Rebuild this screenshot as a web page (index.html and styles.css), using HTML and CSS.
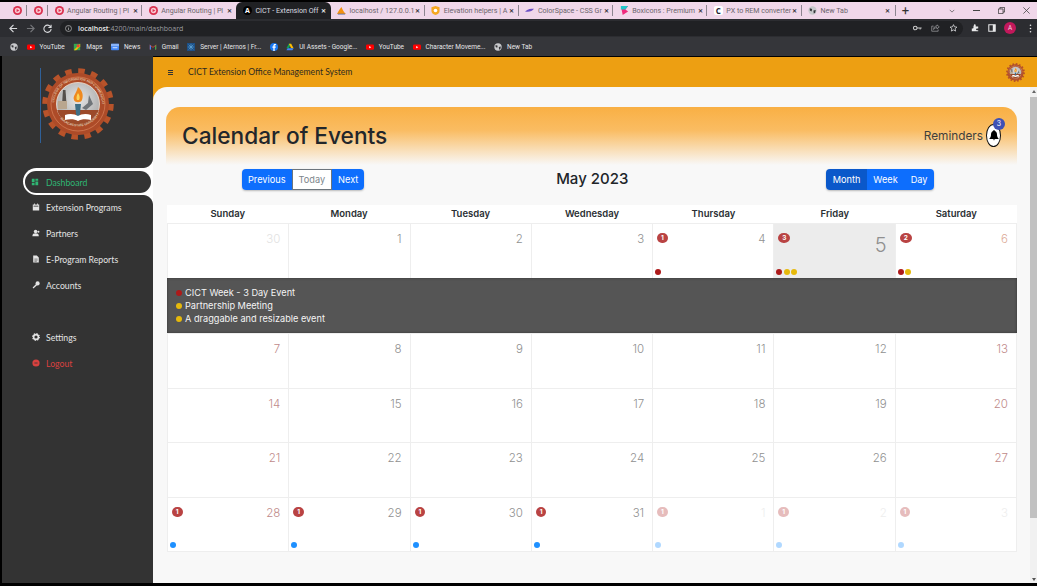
FILE: index.html
```html
<!DOCTYPE html>
<html lang="en">
<head>
<meta charset="utf-8">
<title>CICT - Extension Office</title>
<link rel="stylesheet" href="styles.css">
</head>
<body>
<svg class="defs" width="0" height="0">
  <defs>
    <radialGradient id="sealCore" cx="50%" cy="40%" r="60%"><stop offset="0" stop-color="#e6e6e6"/><stop offset="1" stop-color="#a9a9a9"/></radialGradient>
    <symbol id="play" viewBox="0 0 10 10"><circle cx="5" cy="5" r="5" fill="#d9304f"/><circle cx="5" cy="5" r="3" fill="#f7c6cf"/><path d="M4 3.2 7 5 4 6.8z" fill="#d9304f"/></symbol>
    <symbol id="yt" viewBox="0 0 10 8"><rect y="1" width="10" height="6.4" rx="1.6" fill="#f00"/><path d="M4 2.8 6.6 4.2 4 5.6z" fill="#fff"/></symbol>
    <symbol id="globe" viewBox="0 0 10 10"><circle cx="5" cy="5" r="4.6" fill="#c8c9cc"/><path d="M2 2.6 4.6 3.4 4 6 2 5ZM6 5l2.6-.6L8 7.6 6.4 8.4Z" fill="#35363a"/></symbol>
    <symbol id="seal" viewBox="0 0 72 72">
      <circle cx="36" cy="36" r="32.5" fill="none" stroke="#b8532a" stroke-width="6.5" stroke-dasharray="6.4 6.36"/>
      <circle cx="36" cy="36" r="31" fill="#ad4b28"/>
      <circle cx="36" cy="36" r="27" fill="none" stroke="#d9825a" stroke-width=".7"/>
      <circle cx="36" cy="36" r="21.5" fill="url(#sealCore)" stroke="#f2e6d8" stroke-width=".8"/>
      <path d="M15.2 42a21.5 21.5 0 0 0 41.6 0z" fill="#9c4a2a"/>
      <path d="M21 22h2.500l1 14h-4.500z" fill="#55504c"/>
      <path d="M16 33h9v8h-9z" fill="#b9a68f"/>
      <path d="M47 27l4 9-7 6-4-2 6-5z" fill="#6f7478"/>
      <path d="M33 36h6l-1.600 15h-2.800z" fill="#3f6f86"/>
      <path d="M36 19c5 4 5.500 9 4 13-1 3-7 3-8 0-1.500-4 2-6 4-13z" fill="#ef8a1f"/>
      <path d="M36 25c2 3 2 5 1 7h-2c-1-2-.5-4 1-7z" fill="#fbd45a"/>
      <path d="M23 47c5-2 10-1 13 1 3-2 8-3 13-1v5c-5-1.500-10-1-13 1-3-2-8-2.500-13-1z" fill="#fff"/>
      <path id="sealArc" d="M36 36m-24 0a24 24 0 1 1 48 0" fill="none"/>
      <path id="sealArcLow" d="M14 44a24 24 0 0 0 44 0" fill="none"/>
      <text class="seal-text"><textPath href="#sealArc" startOffset="2%">COLLEGE OF INFORMATION AND COMMUNICATIONS TECHNOLOGY</textPath></text>
      <text class="seal-text"><textPath href="#sealArcLow" startOffset="14%">BULACAN STATE UNIVERSITY</textPath></text>
    </symbol>
  </defs>
</svg>

<div class="tabstrip">
  <div class="tab tab-pin"><svg class="fav"><use href="#play"/></svg></div>
  <div class="tab tab-pin"><svg class="fav"><use href="#play"/></svg></div>
  <div class="tab"><svg class="fav"><use href="#play"/></svg><span class="tab-text">Angular Routing | Pl</span><span class="tab-x">✕</span></div>
  <div class="tab tab-prev"><svg class="fav"><use href="#play"/></svg><span class="tab-text">Angular Routing | Pl</span><span class="tab-x">✕</span></div>
  <div class="tab tab-active"><span class="fav fav-a">A</span><span class="tab-text">CICT - Extension Off</span><span class="tab-x">✕</span></div>
  <div class="tab"><svg class="fav" viewBox="0 0 10 10"><path d="M0 9C2 5 3 3 5 1c1 3 3 6 5 8z" fill="#f29111"/><path d="M1 9h8" stroke="#5b6fa8"/></svg><span class="tab-text">localhost / 127.0.0.1</span><span class="tab-x">✕</span></div>
  <div class="tab"><svg class="fav" viewBox="0 0 10 10"><path d="M5 0l4.500 1.500v4C9.500 8 7 9.500 5 10 3 9.500.5 8 .5 5.500v-4z" fill="#f6a821"/><circle cx="5" cy="5" r="2" fill="#fff"/></svg><span class="tab-text">Elevation helpers | A</span><span class="tab-x">✕</span></div>
  <div class="tab"><svg class="fav" viewBox="0 0 10 10"><path d="M0 6c3-3 7-3 10-3-2 3-6 4-10 3z" fill="#6a4fc4"/></svg><span class="tab-text">ColorSpace - CSS Gr</span><span class="tab-x">✕</span></div>
  <div class="tab"><svg class="fav" viewBox="0 0 10 10"><path d="M1 0h8L6 4 9 6 3 10z" fill="#f02a7d"/><path d="M1 0h8L6 4H1z" fill="#1fc7c9"/></svg><span class="tab-text">Boxicons : Premium</span><span class="tab-x">✕</span></div>
  <div class="tab"><span class="fav fav-c">C</span><span class="tab-text">PX to REM converter</span><span class="tab-x">✕</span></div>
  <div class="tab tab-last"><svg class="fav"><use href="#globe"/></svg><span class="tab-text">New Tab</span><span class="tab-x">✕</span></div>
  <span class="tab-plus">+</span>
  <div class="win-controls">
    <svg class="win-chevron" viewBox="0 0 8 5"><path d="M1 1l3 3 3-3" fill="none" stroke="#555"/></svg>
    <span class="win-min"></span>
    <svg class="win-max" viewBox="0 0 9 9"><path d="M.5 2.500h6v6h-6zM2.500 2.500v-2h6v6h-2" fill="none" stroke="#333"/></svg>
    <svg class="win-close" viewBox="0 0 9 9"><path d="M.5.5l8 8M8.500.5l-8 8" stroke="#444"/></svg>
  </div>
</div>

<div class="toolbar">
  <svg class="nav-ico" viewBox="0 0 10 10"><path d="M9 5H1.500M5 1 1 5l4 4" fill="none" stroke="#d8d9dc" stroke-width="1.300"/></svg>
  <svg class="nav-ico" viewBox="0 0 10 10"><path d="M1 5h7.500M5 1l4 4-4 4" fill="none" stroke="#75767a" stroke-width="1.300"/></svg>
  <svg class="nav-ico" viewBox="0 0 10 10"><path d="M8.500 3.300A4 4 0 1 0 9 5.500M9 .8v3H6" fill="none" stroke="#d8d9dc" stroke-width="1.200"/></svg>
  <div class="omnibox">
    <svg class="info" viewBox="0 0 10 10"><circle cx="5" cy="5" r="4.300" fill="none" stroke="#bbb"/><path d="M5 4.300v3M5 2.500v1" stroke="#bbb"/></svg>
    <span class="url"><b>localhost</b>:4200/main/dashboard</span>
    <svg class="omni-ico" viewBox="0 0 12 8"><circle cx="3" cy="4" r="2.400" fill="none" stroke="#ccc" stroke-width="1.400"/><path d="M5 4h6.500M9.500 4v2" stroke="#ccc" stroke-width="1.300"/></svg>
    <svg class="omni-ico" viewBox="0 0 12 10"><path d="M8 .8l3 2.700-3 2.700V4.500C5.500 4.500 4 5.500 3.500 7 3.500 4 5 2.500 8 2.300zM9.500 7v2.300H1V2.500h2.500" fill="none" stroke="#9a9a9e"/></svg>
    <svg class="omni-ico" viewBox="0 0 10 10"><path d="M5 .8l1.300 2.800 3 .3-2.300 2 .7 3L5 7.400 2.300 8.900l.7-3-2.300-2 3-.3z" fill="none" stroke="#d8d9dc"/></svg>
  </div>
  <div class="tool-right">
    <svg class="tool-ico" viewBox="0 0 10 10"><path d="M1 3h2.500V1.500a1.200 1.200 0 0 1 2.400 0V3H9v2.500H7.500a1.200 1.200 0 0 0 0 2.400H9V9H1V5.500h.9a1.200 1.200 0 0 0 0-2.500z" fill="#e8e9ea"/></svg>
    <svg class="tool-ico" viewBox="0 0 10 10"><path d="M1 1h8v8H1z" fill="none" stroke="#e8e9ea" stroke-width="1.300"/><path d="M6 1h3v8H6z" fill="#e8e9ea"/></svg>
    <span class="avatar">A</span>
    <svg class="tool-dots" viewBox="0 0 3 11"><circle cx="1.500" cy="1.500" r="1" fill="#e8e9ea"/><circle cx="1.500" cy="5.500" r="1" fill="#e8e9ea"/><circle cx="1.500" cy="9.500" r="1" fill="#e8e9ea"/></svg>
  </div>
</div>

<div class="bookmarks">
  <svg class="bm-first"><use href="#globe"/></svg>
  <span class="bm"><svg class="bm-ico"><use href="#yt"/></svg>YouTube</span>
  <span class="bm"><svg class="bm-ico" viewBox="0 0 10 10"><path d="M1 1h8v8H1z" fill="#34a853"/><path d="M1 9 9 1v3L4 9z" fill="#fbbc04"/><circle cx="6.500" cy="3.500" r="2" fill="#ea4335"/></svg>Maps</span>
  <span class="bm"><svg class="bm-ico" viewBox="0 0 10 10"><rect y="1" width="10" height="8" rx="1" fill="#4285f4"/><rect y="1" width="10" height="3" fill="#8ab4f8"/><path d="M2 5.500h6v1H2z" fill="#fff"/></svg>News</span>
  <span class="bm"><svg class="bm-ico" viewBox="0 0 10 10"><path d="M1 2v6h1.500V4L5 6l2.500-2v4H9V2L5 5z" fill="#ea4335"/><path d="M1 2v6h1.500V4z" fill="#4285f4"/><path d="M9 2v6H7.500V4z" fill="#34a853"/></svg>Gmail</span>
  <span class="bm"><svg class="bm-ico" viewBox="0 0 10 10"><rect width="10" height="10" fill="#1c4f86"/><path d="M2 2l6 6M8 2 2 8M5 1v8M1 5h8" stroke="#6cb4e4" stroke-width=".7"/></svg>Server | Aternos | Fr...</span>
  <span class="bm"><svg class="bm-ico" viewBox="0 0 10 10"><circle cx="5" cy="5" r="5" fill="#1877f2"/><path d="M5.800 10V6h1.300l.2-1.500H5.800v-1c0-.5.2-.8.800-.8h.8V1.300C7 1.200 6.600 1.200 6.200 1.200 5 1.200 4.200 2 4.200 3.300v1.200H3V6h1.200v4z" fill="#fff"/></svg></span>
  <span class="bm"><svg class="bm-ico" viewBox="0 0 10 10"><path d="M3.500 1h3L3.500 6.500H.5z" fill="#0f9d58"/><path d="M6.500 1l3 5.500h-3L3.500 1z" fill="#fbbc04"/><path d="M.5 9 2 6.500h7.500L8 9z" fill="#4285f4"/></svg>UI Assets - Google...</span>
  <span class="bm"><svg class="bm-ico"><use href="#yt"/></svg>YouTube</span>
  <span class="bm"><svg class="bm-ico"><use href="#yt"/></svg>Character Moveme...</span>
  <span class="bm"><svg class="bm-ico"><use href="#globe"/></svg>New Tab</span>
</div>

<div class="app">
  <aside class="sidebar">
    <div class="brand">
      <span class="brand-rule"></span>
      <svg class="brand-seal"><use href="#seal"/></svg>
    </div>
    <a class="nav-active">
      <span class="nav-pill">
        <svg class="nav-glyph" viewBox="0 0 10 10"><path d="M1 1h3.500v4H1zM5.500 1H9v2.500H5.500zM5.500 4.500H9V9H5.500zM1 6h3.500v3H1z" fill="currentColor"/></svg>Dashboard
      </span>
    </a>
    <a class="nav-item"><svg class="nav-glyph" viewBox="0 0 10 10"><path d="M1 2h8v7.500H1zM2.500.5h1V2h-1zM6.500.5h1V2h-1z" fill="currentColor"/><path d="M2 4h6" stroke="#333"/></svg>Extension Programs</a>
    <a class="nav-item"><svg class="nav-glyph" viewBox="0 0 10 10"><circle cx="4.500" cy="3" r="2.200" fill="currentColor"/><path d="M.5 9c0-3 1.500-3.800 4-3.800s4 .8 4 3.800z" fill="currentColor"/><circle cx="8" cy="3.500" r="1.300" fill="currentColor"/></svg>Partners</a>
    <a class="nav-item"><svg class="nav-glyph" viewBox="0 0 10 10"><path d="M1.500.5H6L8.500 3v6.500h-7z" fill="currentColor"/><path d="M3 5h4M3 6.500h4M3 8h3" stroke="#333" stroke-width=".6"/></svg>E-Program Reports</a>
    <a class="nav-item"><svg class="nav-glyph" viewBox="0 0 10 10"><circle cx="7" cy="3" r="2.600" fill="currentColor"/><path d="M5.500 3.500 .8 8.200 1.800 9.500 6.500 5z" fill="currentColor"/></svg>Accounts</a>
    <div class="nav-gap"></div>
    <a class="nav-item"><svg class="nav-glyph" viewBox="0 0 10 10"><circle cx="5" cy="5" r="3" fill="none" stroke="currentColor" stroke-width="2"/><circle cx="5" cy="5" r="4.200" fill="none" stroke="currentColor" stroke-width="1.500" stroke-dasharray="1.600 1.700"/></svg>Settings</a>
    <a class="nav-item nav-logout"><svg class="nav-glyph" viewBox="0 0 10 10"><circle cx="5" cy="5" r="4.500" fill="currentColor"/><path d="M3 5h4" stroke="#333"/></svg>Logout</a>
  </aside>

  <div class="workspace">
    <header class="topbar">
      <span class="burger"></span>
      <span class="topbar-title">CICT Extension Office Management System</span>
      <svg class="topbar-seal"><use href="#seal"/></svg>
    </header>
    <div class="content-row">
      <main class="content">
        <section class="hero">
          <h1>Calendar of Events</h1>
          <div class="reminders">
            <span>Reminders</span>
            <span class="bell">
              <svg viewBox="0 0 10 11"><path d="M5 0c.5 0 .8.4.8.900C7.500 1.400 8 3 8 4.500c0 2 .5 3 1.500 3.800v.7h-9v-.7C1.500 7.500 2 6.500 2 4.500 2 3 2.500 1.400 4.200.9 4.200.4 4.500 0 5 0zM3.800 9.500h2.400C6 10.500 4 10.500 3.800 9.500z" fill="#000"/></svg>
              <span class="bell-count">3</span>
            </span>
          </div>
        </section>

        <div class="cal-toolbar">
          <div class="btn-group">
            <button class="btn">Previous</button>
            <button class="btn btn-today">Today</button>
            <button class="btn">Next</button>
          </div>
          <h2>May 2023</h2>
          <div class="btn-group btn-group-views">
            <button class="btn btn-on">Month</button>
            <button class="btn">Week</button>
            <button class="btn">Day</button>
          </div>
        </div>

        <div class="cal-head">
          <span>Sunday</span><span>Monday</span><span>Tuesday</span><span>Wednesday</span><span>Thursday</span><span>Friday</span><span>Saturday</span>
        </div>

        <div class="cal-grid">
          <div class="cell"><div class="cell-top"><span class="num out">30</span></div></div>
          <div class="cell"><div class="cell-top"><span class="num">1</span></div></div>
          <div class="cell"><div class="cell-top"><span class="num">2</span></div></div>
          <div class="cell"><div class="cell-top"><span class="num">3</span></div></div>
          <div class="cell"><div class="cell-top"><span class="count">1</span><span class="num">4</span></div><div class="dots"><i class="dot red"></i></div></div>
          <div class="cell today"><div class="cell-top"><span class="count wide">3</span><span class="num big">5</span></div><div class="dots"><i class="dot red"></i><i class="dot yellow"></i><i class="dot yellow"></i></div></div>
          <div class="cell"><div class="cell-top"><span class="count wide">2</span><span class="num sat-first">6</span></div><div class="dots"><i class="dot red"></i><i class="dot yellow"></i></div></div>

          <div class="events">
            <div class="event"><i class="dot red"></i>CICT Week - 3 Day Event</div>
            <div class="event"><i class="dot yellow"></i>Partnership Meeting</div>
            <div class="event"><i class="dot yellow"></i>A draggable and resizable event</div>
          </div>

          <div class="cell"><div class="cell-top"><span class="num end">7</span></div></div>
          <div class="cell"><div class="cell-top"><span class="num">8</span></div></div>
          <div class="cell"><div class="cell-top"><span class="num">9</span></div></div>
          <div class="cell"><div class="cell-top"><span class="num">10</span></div></div>
          <div class="cell"><div class="cell-top"><span class="num">11</span></div></div>
          <div class="cell"><div class="cell-top"><span class="num">12</span></div></div>
          <div class="cell"><div class="cell-top"><span class="num end">13</span></div></div>

          <div class="cell"><div class="cell-top"><span class="num end">14</span></div></div>
          <div class="cell"><div class="cell-top"><span class="num">15</span></div></div>
          <div class="cell"><div class="cell-top"><span class="num">16</span></div></div>
          <div class="cell"><div class="cell-top"><span class="num">17</span></div></div>
          <div class="cell"><div class="cell-top"><span class="num">18</span></div></div>
          <div class="cell"><div class="cell-top"><span class="num">19</span></div></div>
          <div class="cell"><div class="cell-top"><span class="num end">20</span></div></div>

          <div class="cell"><div class="cell-top"><span class="num end">21</span></div></div>
          <div class="cell"><div class="cell-top"><span class="num">22</span></div></div>
          <div class="cell"><div class="cell-top"><span class="num">23</span></div></div>
          <div class="cell"><div class="cell-top"><span class="num">24</span></div></div>
          <div class="cell"><div class="cell-top"><span class="num">25</span></div></div>
          <div class="cell"><div class="cell-top"><span class="num">26</span></div></div>
          <div class="cell"><div class="cell-top"><span class="num end">27</span></div></div>

          <div class="cell"><div class="cell-top"><span class="count">1</span><span class="num end">28</span></div><div class="dots"><i class="dot blue"></i></div></div>
          <div class="cell"><div class="cell-top"><span class="count">1</span><span class="num">29</span></div><div class="dots"><i class="dot blue"></i></div></div>
          <div class="cell"><div class="cell-top"><span class="count">1</span><span class="num">30</span></div><div class="dots"><i class="dot blue"></i></div></div>
          <div class="cell"><div class="cell-top"><span class="count">1</span><span class="num">31</span></div><div class="dots"><i class="dot blue"></i></div></div>
          <div class="cell faded"><div class="cell-top"><span class="count">1</span><span class="num">1</span></div><div class="dots"><i class="dot blue"></i></div></div>
          <div class="cell faded"><div class="cell-top"><span class="count">1</span><span class="num">2</span></div><div class="dots"><i class="dot blue"></i></div></div>
          <div class="cell faded"><div class="cell-top"><span class="count">1</span><span class="num">3</span></div><div class="dots"><i class="dot blue"></i></div></div>
        </div>
      </main>
      <div class="scrollbar">
        <span class="sb-up"></span>
        <span class="sb-thumb"></span>
        <span class="sb-down"></span>
      </div>
    </div>
  </div>
</div>
</body>
</html>
```
FILE: styles.css
```css
* { box-sizing: border-box; }
html, body { margin: 0; height: 100%; }
body {
  width: 1037px; height: 586px; overflow: hidden; background: #000;
  display: flex; flex-direction: column; padding: 2px 0 3px;
  font-family: "Inter", "Liberation Sans", sans-serif; color: #212529;
}
.defs { position: absolute; }

/* browser chrome */
.tabstrip {
  height: 17px; flex: none; display: flex; align-items: center; padding-left: 6px;
  background: #f0d7e9; font: 7.100px "Roboto", "Liberation Sans", sans-serif; color: #6b656c;
}
.tab {
  width: 94.2px; height: 100%; flex: none; display: flex; align-items: center; gap: 3.500px;
  padding: 0 3px 0 6.500px; position: relative;
}
.tab::after { content: ""; position: absolute; right: 0; top: 3px; bottom: 3px; width: 1px; background: #8d8590; }
.tab-pin { width: 21px; padding: 0 0 0 6.500px; }
.tab-prev::after, .tab-active::after, .tab-last::after { background: transparent; }
.tab-last { border-right: 1px solid #8d8590; height: 11px; }
.tab-active { background: #202124; color: #dcdde0; border-radius: 6px 6px 0 0; }
.tab-text { flex: 1; min-width: 0; white-space: nowrap; }
.tab-x { font-size: 6px; width: 8px; text-align: center; font-weight: 700; color: #3a373c; }
.tab-active .tab-x { color: #e8e9ea; }
.fav { width: 9px; height: 9px; flex: none; }
.fav-a { background: #000; color: #fff; border-radius: 50%; font: 700 7px/9px "Open Sans", sans-serif; text-align: center; }
.fav-c { background: #fff; color: #223; border-radius: 2px; font: 700 8px/9px "Open Sans", sans-serif; text-align: center; }
.tab-plus { margin-left: 6px; font-size: 13px; line-height: 1; color: #333; }
.win-controls { margin-left: auto; display: flex; align-items: center; gap: 18px; padding-right: 7px; }
.win-chevron { width: 6px; height: 4px; }
.win-min { width: 7px; height: 1px; background: #444; }
.win-max { width: 7px; height: 7px; }
.win-close { width: 7px; height: 7px; }

.toolbar {
  height: 18px; flex: none; display: flex; align-items: center; padding: 0 0 0 9px; gap: 8px;
  background: #2c2d31;
}
.nav-ico { width: 9px; height: 9px; flex: none; }
.omnibox {
  flex: none; width: 903px; height: 15px; border-radius: 8px; background: #202124;
  display: flex; align-items: center; padding: 0 5px; gap: 9px;
}
.info { width: 7px; height: 7px; flex: none; }
.url { font: 7px "Open Sans", sans-serif; color: #9b9ca0; margin-left: -3px; flex: 1; }
.url b { color: #eceded; font-weight: 600; }
.omni-ico { width: 9px; height: 8px; flex: none; }
.tool-right { display: flex; align-items: center; gap: 9px; }
.tool-ico { width: 8px; height: 8px; }
.avatar {
  width: 12px; height: 12px; border-radius: 50%; background: #c2185b; color: #f6d5e3;
  font: 6.500px/12px "Open Sans", sans-serif; text-align: center; margin-left: -1px;
}
.tool-dots { width: 3px; height: 9px; margin-left: 4px; }

.bookmarks {
  height: 19px; flex: none; display: flex; align-items: center; gap: 8.500px; padding: 0 0 0 10px;
  background: #35363a; font: 6.500px "Roboto", sans-serif; color: #e6e6e8;
}
.bm-first { width: 8px; height: 8px; }
.bm { display: flex; align-items: center; gap: 5px; white-space: nowrap; }
.bm-ico { width: 8px; height: 8px; flex: none; }

/* app */
.app { flex: 1; min-height: 0; display: flex; padding-left: 2px; background: #000; }
.sidebar {
  width: 151px; flex: none; display: flex; flex-direction: column; background: #333;
  font: 8.700px "Lato", sans-serif; color: #e4e4e4;
}
.brand { height: 112px; flex: none; display: flex; align-items: flex-start; padding: 12px 0 0 38px; }
.brand-rule { width: 1px; height: 75px; background: #2f6098; flex: none; }
.brand-seal { width: 72px; height: 72px; margin-left: 1px; flex: none; }
.seal-text { font: 3.200px "Liberation Sans", sans-serif; fill: #f5e6d5; }
.nav-item { height: 26px; flex: none; display: flex; align-items: center; padding: 0 0 1.500px 30px; gap: 6px; }
.nav-glyph { width: 8px; height: 8px; flex: none; }
.nav-active {
  height: 27px; flex: none; margin-left: 21px; padding: 3px 2px 2px 2px; position: relative; color: #2fb673;
  background: #fff; border-radius: 14px 0 0 14px; display: flex;
}
.nav-active::before, .nav-active::after { content: ""; position: absolute; right: 0; width: 10px; height: 10px; }
.nav-active::before { top: -10px; background: radial-gradient(circle at 0 0, #333 9.500px, #fff 10.500px); }
.nav-active::after { bottom: -10px; background: radial-gradient(circle at 0 100%, #333 9.500px, #fff 10.500px); }
.nav-pill {
  flex: 1; padding-left: 6px; display: flex; align-items: center; gap: 7px;
  background: #333; border-radius: 12px;
}
.nav-gap { height: 26px; flex: none; }
.nav-logout { color: #d9413f; }

.workspace { flex: 1; min-width: 0; display: flex; flex-direction: column; background: #ed9f12; margin-top: 1px; }
.topbar { height: 30px; flex: none; display: flex; align-items: center; padding: 0 12px 0 15px; font: 8.600px "Lato", sans-serif; color: #2d2a20; }
.burger { width: 5px; height: 5px; border-top: 1px solid #333; border-bottom: 1px solid #333; position: relative; }
.burger::after { content: ""; position: absolute; left: 0; right: 0; top: 1px; height: 1px; background: #333; }
.topbar-title { margin-left: 15px; }
.topbar-seal { width: 19px; height: 19px; margin-left: auto; }
.content-row { flex: 1; min-height: 0; display: flex; }
.content {
  flex: 1; min-width: 0; background: #f8f8f8; border-top-left-radius: 14px; padding: 20px 13px 0 13px;
  display: flex; flex-direction: column;
}
.scrollbar { width: 7px; flex: none; background: #f1f1f1; display: flex; flex-direction: column; align-items: center; }
.sb-up { border: 2px solid transparent; border-top: 0; border-bottom: 3px solid #666; margin-top: 3px; }
.sb-thumb { width: 7px; height: 421px; margin-top: 4px; background: #c1c1c1; }
.sb-down { border: 2px solid transparent; border-bottom: 0; border-top: 3px solid #555; margin-top: auto; margin-bottom: 2px; }

.hero {
  height: 58px; flex: none; display: flex; align-items: center; justify-content: space-between;
  padding: 0 16px 0 16px; border-radius: 14px 14px 0 0;
  background: linear-gradient(180deg, #f9b044 0%, #fabc62 40%, #f8f8f8 100%);
}
.hero h1 { margin: 0 0 1px; font: 500 22.700px "Inter", sans-serif; color: #22262b; }
.reminders { display: flex; align-items: center; gap: 3px; font: 11.800px "Inter", sans-serif; color: #3f3e3b; }
.bell {
  width: 15px; height: 23px; margin-top: -2px; border-radius: 50%; background: #fff; border: 1px solid #111; position: relative;
  display: flex; align-items: center; justify-content: center;
}
.bell svg { width: 10px; height: 11px; }
.bell-count {
  position: absolute; top: -7px; right: -5px; width: 12px; height: 12px; border-radius: 50%;
  background: #3f51b5; color: #fff; font: 7px/12px "Inter", sans-serif; text-align: center;
}
.cal-toolbar { display: flex; align-items: center; justify-content: space-between; padding: 3px 83px 1px 76px; height: 25px; flex: none; }
.cal-toolbar h2 { margin: 0 6px 0 0; font: 500 15px "Inter", sans-serif; color: #212529; }
.btn-group { display: flex; border-radius: 4px; box-shadow: 0 1px 2px rgba(0,0,0,.25); overflow: hidden; margin-top: 1px; }
.btn {
  height: 21px; padding: 0 6px; border: 0; background: #0d6efd; color: #fff; font: 9.200px "Inter", sans-serif;
}
.btn-group-views .btn { padding: 0 6.500px; }
.btn-today { background: #fff; color: #7d858c; border: 1px solid #6c757d; }
.btn-on { background: #0a58ca; }

.cal-head {
  margin: 15px 0 0 1px; height: 18px; flex: none; display: grid; grid-template-columns: repeat(7, 1fr);
  background: #fff; width: 850px;
  font: 600 9.500px/18px "Inter", sans-serif; color: #2b2f33; text-align: center;
}
.cal-grid {
  margin-left: 1px; width: 850px; display: grid; grid-template-columns: repeat(7, 1fr);
  grid-template-rows: 55px 55px 55px 54px 55px 54px; background: #fff; flex: none;
  border-left: 1px solid #eee; border-bottom: 1px solid #eee; height: 329px;
}
.cell { border-right: 1px solid #eee; border-top: 1px solid #eee; padding: 8.500px 8px 3px 4px; display: flex; flex-direction: column; min-width: 0; }
.cell-top { display: flex; justify-content: space-between; align-items: flex-start; }
.today { background: #ececec; }
.num { margin-left: auto; font: 300 11.500px/13px "Inter", sans-serif; color: #909090; }
.num.end { color: #c08a8a; }
.num.out { color: #e2e2e2; }
.num.sat-first { color: #dca994; }
.num.big { font-size: 20px; line-height: 24px; }
.count {
  width: 10.500px; height: 10.500px; border-radius: 50%; background: #b94343; color: #fff;
  font: 700 6.500px/10.500px "Inter", sans-serif; text-align: center;
}
.count.wide { width: 12px; border-radius: 6px/5.250px; }
.dots { margin-top: auto; display: flex; gap: 1.500px; margin-left: -2px; }
.dot { width: 6px; height: 6px; border-radius: 50%; display: block; flex: none; }
.red { background: #ad1a1a; }
.yellow { background: #e6b90b; }
.blue { background: #1e90ff; }
.faded .count, .faded .dot { opacity: .35; }
.faded .num { color: #eeeeee; }
.events {
  grid-column: 1 / -1; background: #555; box-shadow: inset 0 0 3px #333; margin-left: -1px;
  padding: 8px 9px; color: #f4f4f4; font: 400 9.200px/13px "Inter", sans-serif;
}
.event { display: flex; align-items: center; gap: 3px; }
```
